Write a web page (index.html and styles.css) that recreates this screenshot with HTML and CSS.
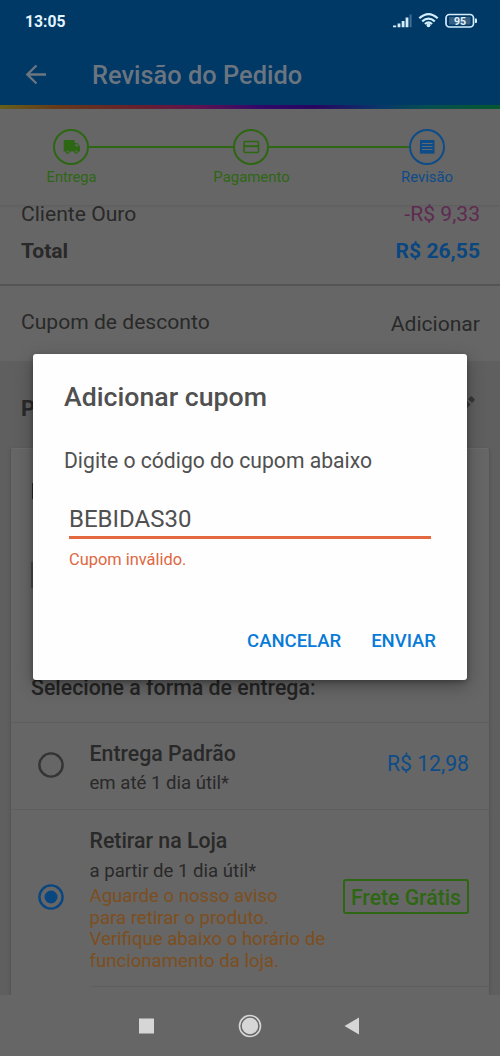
FILE: index.html
```html
<!DOCTYPE html>
<html lang="pt-BR">
<head>
<meta charset="utf-8">
<title>Revisão do Pedido</title>
<link rel="stylesheet" href="styles.css">
</head>
<body>
<div class="screen">
  <header class="top">
    <div class="status">
      <span class="clock">13:05</span>
      <svg class="signals" width="86" height="18" viewBox="0 0 86 18">
        <g fill="#d3edff">
          <path d="M1 14.500h3.200v1.700H1zM5.600 12.500h2.800v3.700H5.600zM9.700 10h2.800v6.200H9.700zM13.600 6.500h2.800v9.700h-2.800z"/>
          <path d="M17.600 3.500h2v12.700h-2z" opacity=".3"/>
          <circle cx="36.500" cy="14.300" r="1.900"/>
        </g>
        <g fill="none" stroke="#d3edff" stroke-width="2.200">
          <path d="M27.300 7.300q9.200-8.400 18.400 0M30.200 10.300q6.300-5.500 12.600 0M32.900 13q3.600-3 7.200 0"/>
          <rect x="54" y="3.500" width="27.500" height="12.500" rx="3.500" stroke-width="1.700"/>
        </g>
        <rect x="57" y="6" width="21.500" height="7.500" fill="#355f82"/>
        <path d="M83 7.500h1q1 0 1 1v2.500q0 1-1 1h-1z" fill="#d3edff"/>
        <text class="battery" x="68" y="13.500" text-anchor="middle">95</text>
      </svg>
    </div>
    <div class="appbar">
      <svg class="back" width="22" height="22" viewBox="0 0 22 22"><path d="M21 10.500H2.500M11.500 1.500L2.300 10.500l9.200 9" fill="none" stroke="#6b7580" stroke-width="2.400"/></svg>
      <h1 class="title">Revisão do Pedido</h1>
    </div>
    <div class="rainbow"></div>
  </header>

  <nav class="stepper">
    <div class="step">
      <svg width="36" height="36" viewBox="0 0 36 36"><circle cx="18" cy="18" r="17" fill="none" stroke="#2e6713" stroke-width="2"/><path fill="#2e6713" d="M11.700 11h9q1 0 1 1v2h2.700l2.600 3.500v5h-1.600a2.200 2.200 0 0 1-4.400 0h-4.200a2.200 2.200 0 0 1-4.400 0h-1.700v-10.500q0-1 1-1z"/><path fill="#666" d="M22.300 15.200h1.800l1.500 2.100h-3.300z"/><circle cx="14.600" cy="22.500" r=".9" fill="#666"/><circle cx="23.200" cy="22.500" r=".9" fill="#666"/></svg>
      <span>Entrega</span>
    </div>
    <div class="rail rail-first"></div>
    <div class="step">
      <svg width="36" height="36" viewBox="0 0 36 36"><g fill="none" stroke="#2e6713" stroke-width="2"><circle cx="18" cy="18" r="17"/><rect x="11" y="12.500" width="14.500" height="11" rx="1" stroke-width="1.600"/><path d="M11 17.200h14.500"/></g></svg>
      <span>Pagamento</span>
    </div>
    <div class="rail"></div>
    <div class="step step-current">
      <svg width="36" height="36" viewBox="0 0 36 36"><circle cx="18" cy="18" r="17" fill="none" stroke="#0d4c88" stroke-width="2"/><path fill="#0d4c88" d="M11 11h14.500V25l-1.200-.8-1.200.8-1.200-.8-1.200.8-1.200-.8-1.300.8-1.200-.8-1.200.8-1.200-.8-1.200.8-1.200-.8-1.400.8z"/><path stroke="#61686f" stroke-width="1.100" d="M13 14.500h10.500M13 17.500h10.500M13 20.500h10.500"/></svg>
      <span>Revisão</span>
    </div>
  </nav>

  <section class="summary">
    <div class="line line-gold"><span>Cliente Ouro</span><span class="discount">-R$ 9,33</span></div>
    <div class="line line-total"><span>Total</span><span class="amount">R$ 26,55</span></div>
  </section>
  <section class="coupon"><span>Cupom de desconto</span><span class="add">Adicionar</span></section>

  <main class="packages">
    <div class="package-head">
      <h2>P</h2>
      <svg width="20" height="20" viewBox="0 0 20 20"><path fill="#383838" d="M0 16L10.500 5.500l4 4L4 20H0zM12 4l2.500-2.500q.7-.7 1.400 0l2.600 2.600q.7.700 0 1.400L16 8z"/></svg>
    </div>
    <div class="card">
      <div class="card-body">
        <i class="mark mark-name"></i>
        <i class="mark mark-item"></i>
        <h3>Selecione a forma de entrega:</h3>
      </div>
      <div class="option option-standard">
        <svg class="radio" width="26" height="26" viewBox="0 0 26 26"><circle cx="13" cy="13" r="11.600" fill="none" stroke="#343434" stroke-width="2.400"/></svg>
        <div class="info"><b>Entrega Padrão</b><span class="term">em até 1 dia útil*</span></div>
        <span class="price">R$ 12,98</span>
      </div>
      <div class="option option-pickup">
        <svg class="radio radio-on" width="26" height="26" viewBox="0 0 26 26"><circle cx="13" cy="13" r="11.600" fill="none" stroke="#0a4680" stroke-width="2.400"/><circle cx="13" cy="13" r="6.500" fill="#0a4680"/></svg>
        <div class="info"><b>Retirar na Loja</b><span class="term">a partir de 1 dia útil*</span>
          <p class="notice">Aguarde o nosso aviso<br>para retirar o produto.<br>Verifique abaixo o horário de<br>funcionamento da loja.</p>
        </div>
        <span class="free">Frete Grátis</span>
      </div>
      <div class="card-rule"></div>
    </div>
  </main>

  <footer class="navbar">
    <svg width="500" height="61" viewBox="0 0 500 61"><g fill="#d6d6d6"><path d="M139 23.500h15v15h-15zM344.500 31l14.500-8.500v17z"/><circle cx="250" cy="31" r="8.200"/></g><circle cx="250" cy="31" r="10.500" fill="none" stroke="#d6d6d6" stroke-width="1.600"/></svg>
  </footer>

  <div class="dialog" role="dialog">
    <h2 class="dialog-title">Adicionar cupom</h2>
    <p class="dialog-text">Digite o código do cupom abaixo</p>
    <div class="field">BEBIDAS30</div>
    <p class="error">Cupom inválido.</p>
    <div class="actions"><span class="cancel">CANCELAR</span><span class="send">ENVIAR</span></div>
  </div>
</div>
</body>
</html>
```
FILE: styles.css
```css
* { box-sizing: border-box; }
body { margin: 0; font-family: Roboto, "Liberation Sans", sans-serif; }
h1, h2, h3, p { margin: 0; font-weight: 500; }
svg { display: block; flex: none; }
.screen { position: relative; width: 500px; height: 1056px; overflow: hidden; background: #666; color: #292929; white-space: nowrap; }

.top { height: 109px; background: #003866; }
.status { display: flex; justify-content: space-between; height: 41px; padding: 11px 22px 0 25px; }
.clock { font-size: 15.7px; line-height: 21px; font-weight: 700; color: #e3f4ff; }
.battery { font-size: 10.5px; font-weight: 700; fill: #e3f4ff; }
.appbar { display: flex; align-items: center; height: 64px; padding: 4px 0 0 25px; }
.title { margin-left: 45px; font-size: 25.4px; line-height: 30px; color: #6b7580; }
.rainbow { height: 4px; background: linear-gradient(90deg, #66601a 0%, #67381a 12%, #67202d 28%, #61134e 39%, #32086a 52%, #280561 63%, #08366a 76%, #054e52 85%, #06582f 100%); }

.stepper { display: flex; justify-content: space-between; height: 96px; padding: 20px 47px 0 45px; box-shadow: 0 1px 2px #5d5d5d; color: #2e6713; }
.step { display: flex; flex-direction: column; align-items: center; width: 52px; font-size: 14.9px; line-height: 18px; }
.step span { margin-top: 3px; }
.step:nth-child(3) span { margin-left: 1px; }
.step:nth-child(1) span { margin-left: 1px; font-size: 14.6px; }
.step-current { color: #0d4c88; }
.rail { flex: 1; height: 2px; margin: 17px -8px 0; background: #2e6713; }
.rail-first { flex: 0 0 144px; }

.summary { height: 81px; border-bottom: 2px solid #555; }
.line { display: flex; justify-content: space-between; padding: 0 20px 0 21px; font-size: 21.1px; line-height: 26px; }
.line-gold { height: 32px; line-height: 17px; }
.line-total { padding-top: 1px; font-weight: 700; }
.discount { color: #5e2b50; }
.amount { color: #0a4680; }
.coupon { display: flex; justify-content: space-between; height: 75px; padding: 23px 20px 0 21px; font-size: 21.1px; line-height: 26px; }
.add { padding-top: 2px; }

.packages { height: 634px; padding: 0 10px; background: #5f5f5f; }
.package-head { display: flex; justify-content: space-between; height: 87px; padding: 34px 14px 0 11px; }
.package-head h2 { padding-top: 1px; font-size: 22px; line-height: 26px; font-weight: 700; }
.card { height: 547px; border: 1px solid #575757; border-width: 0 1px; border-top: 1px solid #6b6b6b; background: #666; border-radius: 3px 3px 0 0; box-shadow: 0 1px 3px #535353; }
.card-body { display: flex; flex-direction: column; height: 274px; padding: 34px 19px 0 20px; border-bottom: 1px solid #5e5e5e; }
.card-body h3 { margin-top: 87px; font-size: 21.3px; line-height: 26px; font-weight: 500; color: #242424; }
.mark { display: block; flex: none; margin-left: 1px; width: 3px; height: 16px; background: #292929; }
.mark-item { margin: 63px 0 0; height: 26px; background: #494949; }
.option { display: flex; padding: 0 20px 0 27px; border-bottom: 1px solid #5e5e5e; }
.option-standard { height: 87px; }
.option-pickup { height: 176px; border: 0; }
.radio { margin-top: 29px; }
.radio-on { margin-top: 74px; }
.info { flex: 1; margin-left: 25.5px; padding-top: 18px; font-size: 18.6px; line-height: 22px; }
.info b { display: block; font-size: 21.3px; line-height: 26px; font-weight: 500; }
.term { display: block; margin-top: 5px; line-height: 22px; }
.option-pickup .term { margin-top: 6px; }
.notice { margin-top: 4px; font-weight: 400; line-height: 21.7px; color: #7d4e1e; }
.price { margin-top: 28px; font-size: 21.2px; line-height: 26px; color: #0d4c88; }
.free { height: 35px; margin-top: 69px; margin-left: -30px; padding: 0 6px; border: 2px solid #2e6713; border-radius: 3px; font-size: 21.2px; line-height: 33px; font-weight: 500; color: #2e6713; }
.card-rule { height: 1px; margin-left: 80px; background: #5e5e5e; }
.navbar { height: 61px; background: #666; }

.dialog { position: absolute; left: 33px; top: 354px; width: 434px; height: 326px; padding: 28px 31px 0; background: #fefefe; border-radius: 3px; box-shadow: 0 6px 18px rgba(0,0,0,.3), 0 2px 5px rgba(0,0,0,.25); color: #505050; }
.dialog-title { font-size: 26.7px; line-height: 30px; }
.dialog-text { margin-top: 36px; font-size: 21.15px; line-height: 26px; font-weight: 400; }
.field { height: 49px; margin: 16px 5px 0; padding-top: 14px; border-bottom: 3px solid #e4693f; font-size: 24px; line-height: 30px; }
.error { margin: 11px 5px 0; font-size: 16.4px; line-height: 20px; font-weight: 400; color: #df673f; }
.actions { display: flex; justify-content: flex-end; gap: 30px; margin-top: 59px; font-size: 18.5px; line-height: 24px; font-weight: 500; color: #087bd8; }
```
